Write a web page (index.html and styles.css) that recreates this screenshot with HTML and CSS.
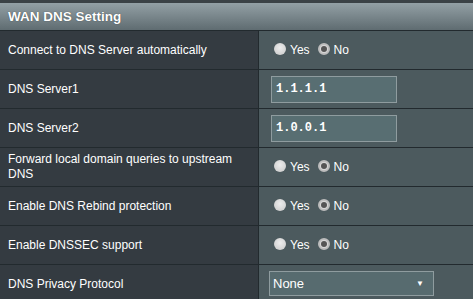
FILE: index.html
```html
<!DOCTYPE html>
<html>
<head>
<meta charset="utf-8">
<link rel="stylesheet" href="styles.css">
</head>
<body>
<div class="panel">
  <div class="head">WAN DNS Setting</div>
  <div class="row">
    <div class="label">Connect to DNS Server automatically</div>
    <div class="value">
      <span class="radio"></span><span class="opt">Yes</span>
      <span class="radio on"></span><span class="opt">No</span>
    </div>
  </div>
  <div class="row">
    <div class="label">DNS Server1</div>
    <div class="value"><div class="input">1.1.1.1</div></div>
  </div>
  <div class="row">
    <div class="label">DNS Server2</div>
    <div class="value"><div class="input">1.0.0.1</div></div>
  </div>
  <div class="row">
    <div class="label">Forward local domain queries to upstream DNS</div>
    <div class="value">
      <span class="radio"></span><span class="opt">Yes</span>
      <span class="radio on"></span><span class="opt">No</span>
    </div>
  </div>
  <div class="row">
    <div class="label">Enable DNS Rebind protection</div>
    <div class="value">
      <span class="radio"></span><span class="opt">Yes</span>
      <span class="radio on"></span><span class="opt">No</span>
    </div>
  </div>
  <div class="row">
    <div class="label">Enable DNSSEC support</div>
    <div class="value">
      <span class="radio"></span><span class="opt">Yes</span>
      <span class="radio on"></span><span class="opt">No</span>
    </div>
  </div>
  <div class="row">
    <div class="label">DNS Privacy Protocol</div>
    <div class="value"><div class="select"><span>None</span><span class="arrow">▼</span></div></div>
  </div>
</div>
</body>
</html>
```
FILE: styles.css
```css
html, body {
  margin: 0;
  padding: 0;
  background: #4c5a5e;
}
body {
  font-family: "Liberation Sans", Arial, sans-serif;
  font-size: 12px;
  color: #fff;
}
.panel {
  width: 473px;
  border-top: 3px solid #3b4246;
}
.head {
  height: 27px;
  line-height: 28px;
  padding-left: 8px;
  font-weight: bold;
  font-size: 13.5px;
  background: linear-gradient(#93a0a5, #5f6c71);
  border-bottom: 1px solid #222a2e;
  text-shadow: 0 0 1px #2f383c;
}
.row {
  display: flex;
  height: 38px;
  border-bottom: 1px solid #222a2e;
}
.label {
  width: 250px;
  padding-left: 8px;
  background: #343b41;
  border-right: 1px solid #222a2e;
  display: flex;
  align-items: center;
  line-height: 15px;
}
.value {
  flex: 1;
  background: #4c5a5e;
  display: flex;
  align-items: center;
  padding-left: 12px;
}
.radio {
  width: 12px;
  height: 12px;
  border-radius: 50%;
  background: radial-gradient(circle at 50% 40%, #ececec, #c8c8c8);
  box-sizing: border-box;
  margin-top: -2px;
  margin-left: 3px;
  position: relative;
}
.radio.on {
  margin-left: 5px;
  background: #d8d8d8;
  border: 2px solid #bdbdbd;
}
.radio.on::after {
  content: "";
  position: absolute;
  left: 1px;
  top: 1px;
  width: 6px;
  height: 6px;
  border-radius: 50%;
  background: #555;
}
.opt {
  margin-left: 4px;
  margin-right: 3px;
  font-size: 12px;
}
.input {
  width: 126px;
  height: 27px;
  box-sizing: border-box;
  border: 1px solid #8f9c9f;
  background: #586e72;
  font-family: "Liberation Mono", "Courier New", monospace;
  font-weight: bold;
  font-size: 12px;
  line-height: 25px;
  padding-left: 4px;
}
.select {
  margin-left: -2px;
  margin-top: -2px;
  width: 165px;
  height: 25px;
  box-sizing: border-box;
  border: 1px solid #8f9c9f;
  background: #576b6f;
  display: flex;
  align-items: center;
  justify-content: space-between;
  padding: 0 9px 0 3px;
  font-size: 13px;
}
.arrow {
  font-size: 8px;
}
```
